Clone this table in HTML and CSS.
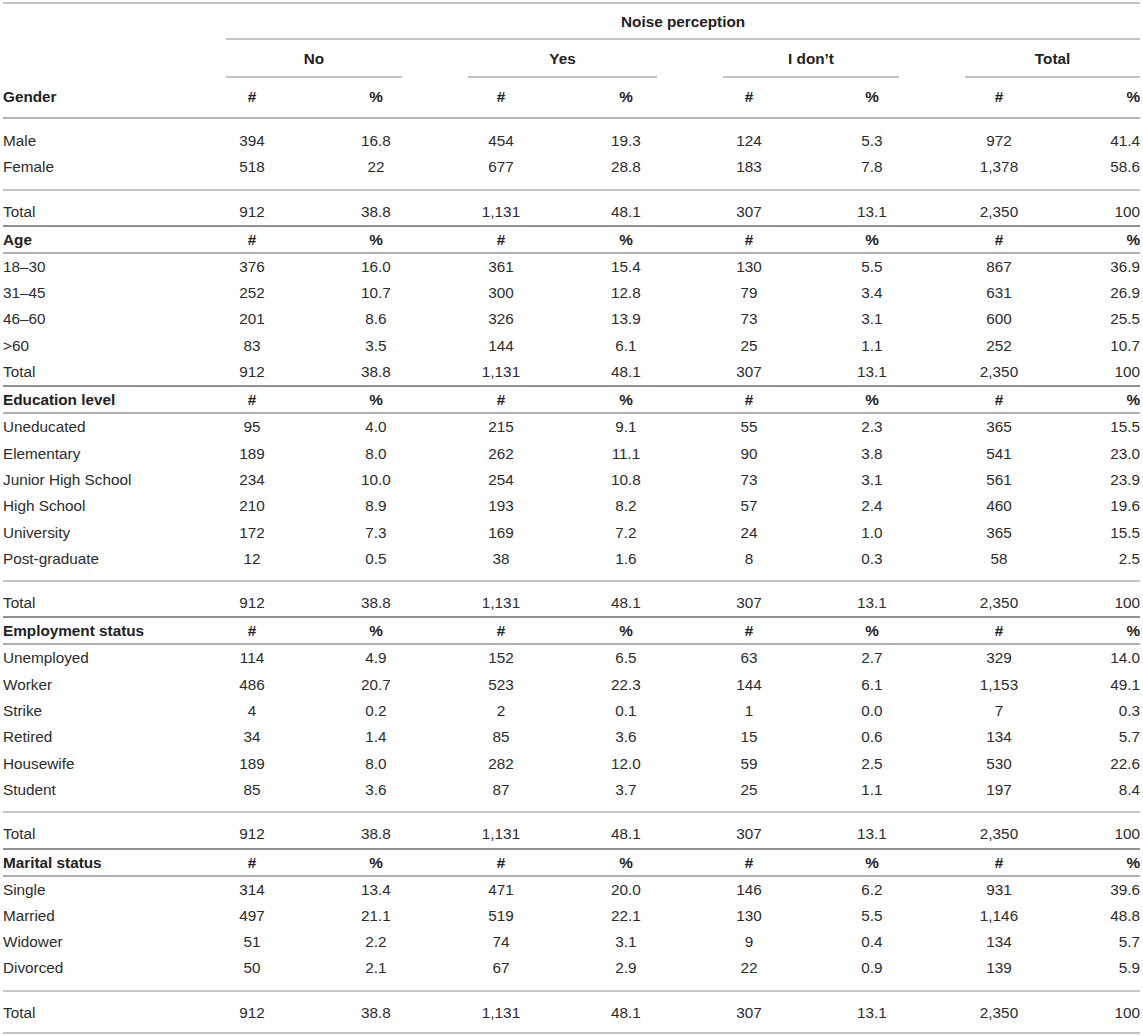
FILE: index.html
```html
<!DOCTYPE html>
<html>
<head>
<meta charset="utf-8">
<link rel="stylesheet" href="styles.css">
</head>
<body>
<div class="wrap">
<table class="tbl">
<colgroup>
<col class="c-label"><col class="c124"><col class="c124"><col class="c126"><col class="c124"><col class="c122"><col class="c124"><col class="c130"><col class="c76">
</colgroup>
<thead>
<tr class="hr-a"><th class="empty"></th><th colspan="8"><div class="uline noise">Noise perception</div></th></tr>
<tr class="hr-b"><th class="empty"></th>
<th colspan="2"><div class="uline grp g-no">No</div></th>
<th colspan="2"><div class="uline grp g-yes">Yes</div></th>
<th colspan="2"><div class="uline grp g-idk">I don’t</div></th>
<th colspan="2"><div class="uline grp g-tot">Total</div></th>
</tr>
<tr class="hr-c"><th class="lab">Gender</th><th>#</th><th>%</th><th>#</th><th>%</th><th>#</th><th>%</th><th>#</th><th class="last-col">%</th></tr>
</thead>
<tbody>
<tr class="first"><td>Male</td><td>394</td><td>16.8</td><td>454</td><td>19.3</td><td>124</td><td>5.3</td><td>972</td><td>41.4</td></tr>
<tr class="last"><td>Female</td><td>518</td><td>22</td><td>677</td><td>28.8</td><td>183</td><td>7.8</td><td>1,378</td><td>58.6</td></tr>
<tr class="tot"><td>Total</td><td>912</td><td>38.8</td><td>1,131</td><td>48.1</td><td>307</td><td>13.1</td><td>2,350</td><td>100</td></tr>

<tr class="sh"><td>Age</td><td>#</td><td>%</td><td>#</td><td>%</td><td>#</td><td>%</td><td>#</td><td>%</td></tr>
<tr><td>18–30</td><td>376</td><td>16.0</td><td>361</td><td>15.4</td><td>130</td><td>5.5</td><td>867</td><td>36.9</td></tr>
<tr><td>31–45</td><td>252</td><td>10.7</td><td>300</td><td>12.8</td><td>79</td><td>3.4</td><td>631</td><td>26.9</td></tr>
<tr><td>46–60</td><td>201</td><td>8.6</td><td>326</td><td>13.9</td><td>73</td><td>3.1</td><td>600</td><td>25.5</td></tr>
<tr><td>&gt;60</td><td>83</td><td>3.5</td><td>144</td><td>6.1</td><td>25</td><td>1.1</td><td>252</td><td>10.7</td></tr>
<tr><td>Total</td><td>912</td><td>38.8</td><td>1,131</td><td>48.1</td><td>307</td><td>13.1</td><td>2,350</td><td>100</td></tr>

<tr class="sh"><td>Education level</td><td>#</td><td>%</td><td>#</td><td>%</td><td>#</td><td>%</td><td>#</td><td>%</td></tr>
<tr><td>Uneducated</td><td>95</td><td>4.0</td><td>215</td><td>9.1</td><td>55</td><td>2.3</td><td>365</td><td>15.5</td></tr>
<tr><td>Elementary</td><td>189</td><td>8.0</td><td>262</td><td>11.1</td><td>90</td><td>3.8</td><td>541</td><td>23.0</td></tr>
<tr><td>Junior High School</td><td>234</td><td>10.0</td><td>254</td><td>10.8</td><td>73</td><td>3.1</td><td>561</td><td>23.9</td></tr>
<tr><td>High School</td><td>210</td><td>8.9</td><td>193</td><td>8.2</td><td>57</td><td>2.4</td><td>460</td><td>19.6</td></tr>
<tr><td>University</td><td>172</td><td>7.3</td><td>169</td><td>7.2</td><td>24</td><td>1.0</td><td>365</td><td>15.5</td></tr>
<tr class="last"><td>Post-graduate</td><td>12</td><td>0.5</td><td>38</td><td>1.6</td><td>8</td><td>0.3</td><td>58</td><td>2.5</td></tr>
<tr class="tot"><td>Total</td><td>912</td><td>38.8</td><td>1,131</td><td>48.1</td><td>307</td><td>13.1</td><td>2,350</td><td>100</td></tr>

<tr class="sh"><td>Employment status</td><td>#</td><td>%</td><td>#</td><td>%</td><td>#</td><td>%</td><td>#</td><td>%</td></tr>
<tr><td>Unemployed</td><td>114</td><td>4.9</td><td>152</td><td>6.5</td><td>63</td><td>2.7</td><td>329</td><td>14.0</td></tr>
<tr><td>Worker</td><td>486</td><td>20.7</td><td>523</td><td>22.3</td><td>144</td><td>6.1</td><td>1,153</td><td>49.1</td></tr>
<tr><td>Strike</td><td>4</td><td>0.2</td><td>2</td><td>0.1</td><td>1</td><td>0.0</td><td>7</td><td>0.3</td></tr>
<tr><td>Retired</td><td>34</td><td>1.4</td><td>85</td><td>3.6</td><td>15</td><td>0.6</td><td>134</td><td>5.7</td></tr>
<tr><td>Housewife</td><td>189</td><td>8.0</td><td>282</td><td>12.0</td><td>59</td><td>2.5</td><td>530</td><td>22.6</td></tr>
<tr class="last"><td>Student</td><td>85</td><td>3.6</td><td>87</td><td>3.7</td><td>25</td><td>1.1</td><td>197</td><td>8.4</td></tr>
<tr class="tot"><td>Total</td><td>912</td><td>38.8</td><td>1,131</td><td>48.1</td><td>307</td><td>13.1</td><td>2,350</td><td>100</td></tr>

<tr class="sh"><td>Marital status</td><td>#</td><td>%</td><td>#</td><td>%</td><td>#</td><td>%</td><td>#</td><td>%</td></tr>
<tr><td>Single</td><td>314</td><td>13.4</td><td>471</td><td>20.0</td><td>146</td><td>6.2</td><td>931</td><td>39.6</td></tr>
<tr><td>Married</td><td>497</td><td>21.1</td><td>519</td><td>22.1</td><td>130</td><td>5.5</td><td>1,146</td><td>48.8</td></tr>
<tr><td>Widower</td><td>51</td><td>2.2</td><td>74</td><td>3.1</td><td>9</td><td>0.4</td><td>134</td><td>5.7</td></tr>
<tr class="last"><td>Divorced</td><td>50</td><td>2.1</td><td>67</td><td>2.9</td><td>22</td><td>0.9</td><td>139</td><td>5.9</td></tr>
<tr class="tot final"><td>Total</td><td>912</td><td>38.8</td><td>1,131</td><td>48.1</td><td>307</td><td>13.1</td><td>2,350</td><td>100</td></tr>
</tbody>
</table>
</div>
</body>
</html>
```

FILE: styles.css
```css
html, body {
  margin: 0;
  padding: 0;
  background: #ffffff;
}

.wrap {
  padding: 2px 3px 0 3px;
}

.tbl {
  width: 1137px;
  table-layout: fixed;
  border-collapse: separate;
  border-spacing: 0;
  border-top: 2px solid #c2c2c2;
  font-family: "Liberation Sans", Arial, Helvetica, sans-serif;
  font-size: 15.3px;
  color: #2c2c2c;
}

.c-label { width: 187px; }
.c124 { width: 124px; }
.c126 { width: 126px; }
.c122 { width: 122px; }
.c130 { width: 130px; }
.c76 { width: 76px; }

.tbl th,
.tbl td {
  padding: 5px 0;
  line-height: 16.3px;
  text-align: center;
  white-space: nowrap;
  vertical-align: top;
}

.tbl th {
  font-weight: bold;
  color: #222;
}

.tbl th.empty {
  padding: 0;
}

.tbl td:first-child,
.tbl th.lab {
  text-align: left;
}

.tbl td:last-child,
.tbl th.last-col {
  text-align: right;
}

/* header rows */
.hr-a th,
.hr-b th {
  padding: 0;
}

.uline {
  line-height: 16px;
  border-bottom: 2px solid #c2c2c2;
  text-align: center;
}

.noise {
  margin-left: 36px;
  padding: 10px 0 8px;
}

.grp {
  padding: 11px 0 9px;
}

.g-no { margin: 0 36px; }
.g-yes { margin: 0 31px 0 30px; }
.g-idk { margin: 0 35px; }
.g-tot { margin: 0 0 0 31px; }

.hr-c th {
  padding: 11px 0 12px;
  line-height: 16px;
  border-bottom: 2px solid #b4b4b4;
}

/* body rows */
tr.first td {
  padding-top: 14px;
}

tr.last td {
  padding-bottom: 13px;
}

tr.tot td {
  border-top: 2px solid #c6c6c6;
  padding-top: 13px;
}

tr.final td {
  padding-bottom: 11px;
  border-bottom: 2px solid #c2c2c2;
}

tr.sh td {
  font-weight: bold;
  color: #222;
  line-height: 16px;
  padding: 5px 0 4px;
  border-top: 2px solid #909090;
  border-bottom: 2px solid #b0b0b0;
}
```
